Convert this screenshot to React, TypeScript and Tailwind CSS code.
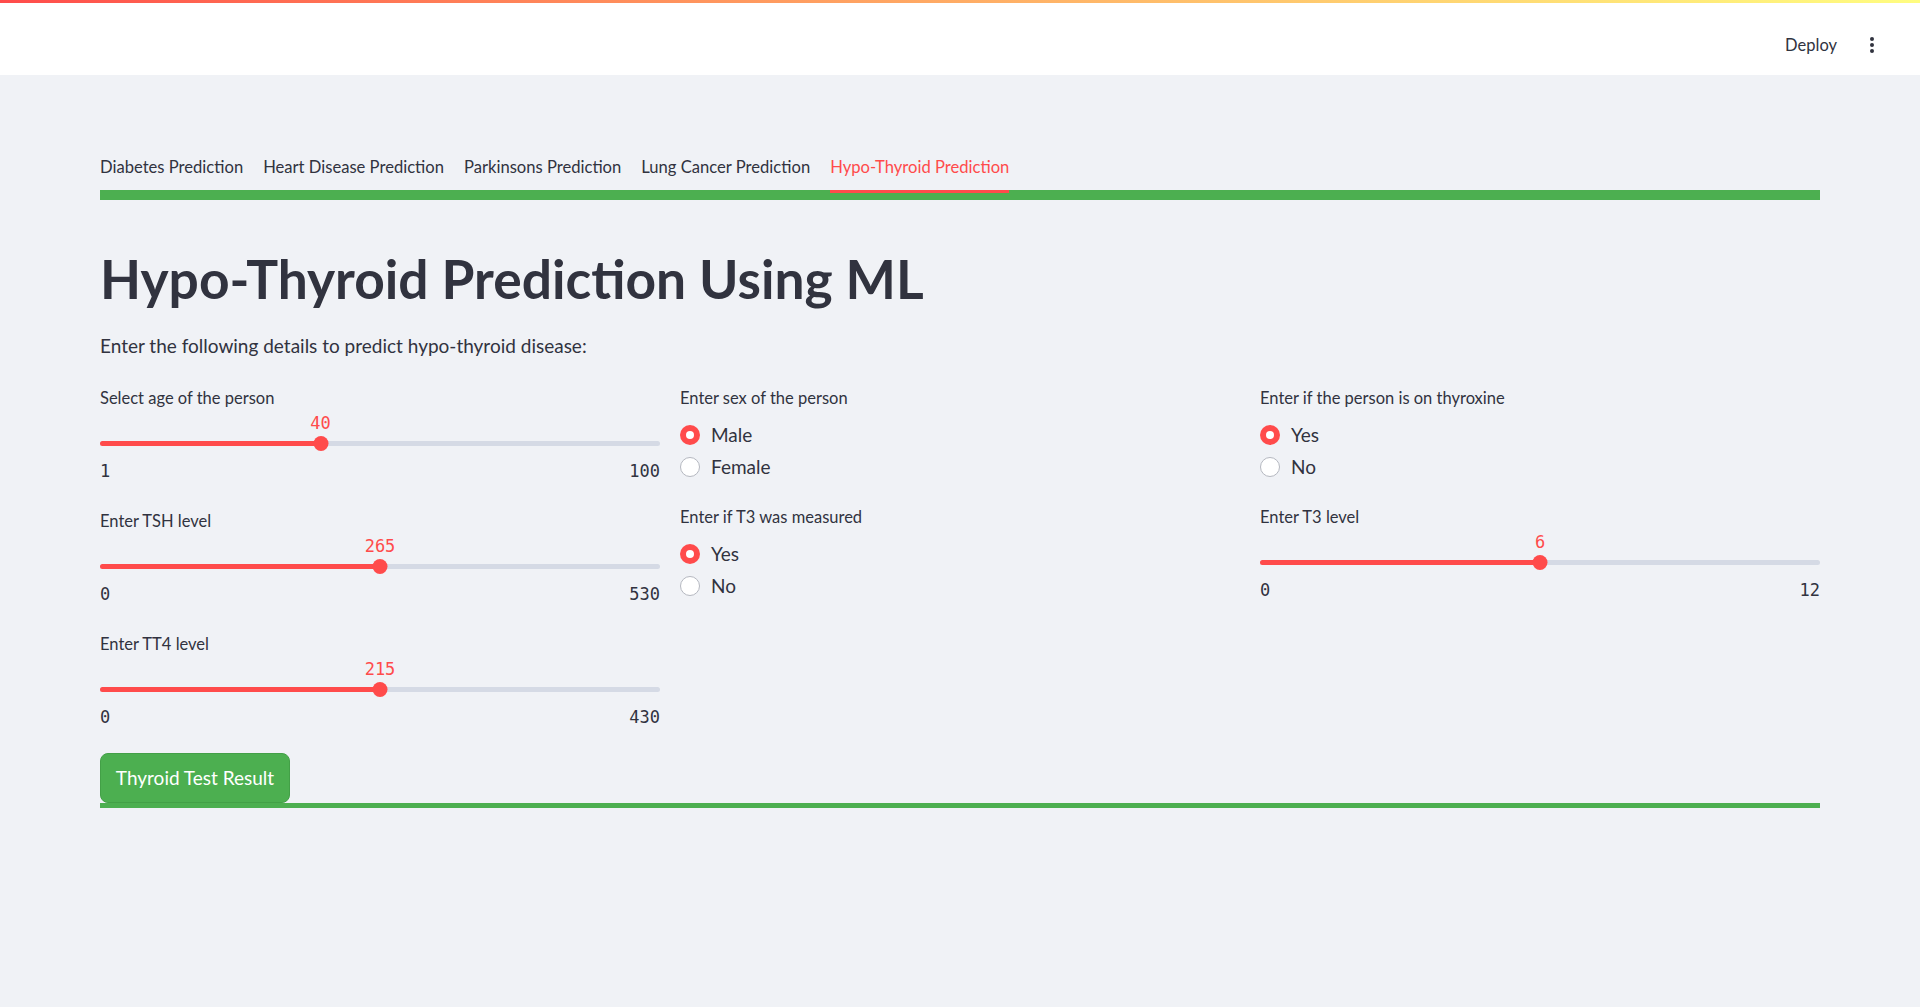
import React from "react";

const tabs = [
  "Diabetes Prediction",
  "Heart Disease Prediction",
  "Parkinsons Prediction",
  "Lung Cancer Prediction",
  "Hypo-Thyroid Prediction",
];

type SliderProps = { label: string; value: number; min: number; max: number };

const Slider = ({ label, value, min, max }: SliderProps) => {
  const pct = ((value - min) / (max - min)) * 100;
  return (
    <div className="flex flex-col mb-[15px]">
      <div className="h-[28px] leading-[28px] text-[16.5px]">{label}</div>
      <div className="relative h-[22px]">
        <span
          className="absolute top-0 -translate-x-1/2 leading-[22px] text-[17px] text-[#FF4B4B] font-['DejaVu_Sans_Mono',monospace]"
          style={{ left: `${pct}%` }}
        >
          {value}
        </span>
      </div>
      <div className="relative h-[18px] flex items-center">
        <div className="h-[5px] w-full rounded-full bg-[#D5DAE5] overflow-hidden">
          <div className="h-full bg-[#FF4B4B]" style={{ width: `${pct}%` }} />
        </div>
        <div
          className="absolute top-[1.5px] w-[15px] h-[15px] rounded-full bg-[#FF4B4B] -translate-x-1/2"
          style={{ left: `${pct}%` }}
        />
      </div>
      <div className="h-[40px] flex justify-between items-center text-[17px] font-['DejaVu_Sans_Mono',monospace]">
        <span>{min}</span>
        <span>{max}</span>
      </div>
    </div>
  );
};

type RadioProps = { label: string; options: string[]; selected: number };

const RadioGroup = ({ label, options, selected }: RadioProps) => (
  <div className="flex flex-col mb-[20px]">
    <div className="h-[28px] leading-[28px] text-[16.5px]">{label}</div>
    <div className="flex flex-col pt-[7px]">
      {options.map((opt, i) => (
        <div key={opt} className="h-[32px] flex items-center gap-[11px]">
          {i === selected ? (
            <span className="w-[20px] h-[20px] rounded-full bg-[#FF4B4B] flex items-center justify-center">
              <span className="w-[8px] h-[8px] rounded-full bg-white" />
            </span>
          ) : (
            <span className="w-[20px] h-[20px] rounded-full bg-white border border-[#B5B8C0]" />
          )}
          <span className="text-[19px]">{opt}</span>
        </div>
      ))}
    </div>
  </div>
);

const App = () => {
  return (
    <div className="min-h-screen bg-[#F0F2F6] text-[#31333F] font-['Lato','Noto_Sans',sans-serif]">
      <header className="h-[75px] bg-white flex flex-col">
        <div className="h-[3px] bg-gradient-to-r from-[#FF4B4B] to-[#FFFD80]" />
        <div className="flex-1 flex items-center justify-end pt-[12px] pr-[38px] gap-[25px]">
          <span className="text-[16.5px]">Deploy</span>
          <svg width="20" height="20" viewBox="0 0 20 20" fill="#31333F">
            <circle cx="10" cy="4" r="2" />
            <circle cx="10" cy="10" r="2" />
            <circle cx="10" cy="16" r="2" />
          </svg>
        </div>
      </header>

      <main className="w-[1720px] mx-auto pt-[65px] pb-[100px]">
        <div className="h-[50px] pt-[4px] flex items-center gap-[20px]">
          {tabs.map((t, i) => (
            <div
              key={t}
              className={
                i === 4
                  ? "relative h-full flex items-center text-[16.6px] text-[#FF4B4B]"
                  : "relative h-full flex items-center text-[16.6px]"
              }
            >
              {t}
              {i === 4 && (
                <span className="absolute left-0 right-0 -bottom-[3px] h-[3px] bg-[#FF4B4B] z-10" />
              )}
            </div>
          ))}
        </div>
        <div className="h-[10px] bg-[#4CAF50]" />

        <h1 className="mt-[48px] h-[60px] leading-[60px] text-[53.3px] font-bold">
          Hypo-Thyroid Prediction Using ML
        </h1>
        <p className="mt-[23px] h-[30px] leading-[30px] text-[19px]">
          Enter the following details to predict hypo-thyroid disease:
        </p>

        <div className="mt-[23px] grid grid-cols-3 gap-x-[20px] items-start">
          <div className="flex flex-col">
            <Slider label="Select age of the person" value={40} min={1} max={100} />
            <Slider label="Enter TSH level" value={265} min={0} max={530} />
            <Slider label="Enter TT4 level" value={215} min={0} max={430} />
          </div>
          <div className="flex flex-col">
            <RadioGroup label="Enter sex of the person" options={["Male", "Female"]} selected={0} />
            <RadioGroup label="Enter if T3 was measured" options={["Yes", "No"]} selected={0} />
          </div>
          <div className="flex flex-col">
            <RadioGroup label="Enter if the person is on thyroxine" options={["Yes", "No"]} selected={0} />
            <Slider label="Enter T3 level" value={6} min={0} max={12} />
          </div>
        </div>

        <button className="h-[50px] w-[190px] rounded-[8px] bg-[#4CAF50] border border-[#43A047] text-white text-[19px]">
          Thyroid Test Result
        </button>
        <div className="h-[5px] bg-[#4CAF50]" />
      </main>
    </div>
  );
};

export default App;
